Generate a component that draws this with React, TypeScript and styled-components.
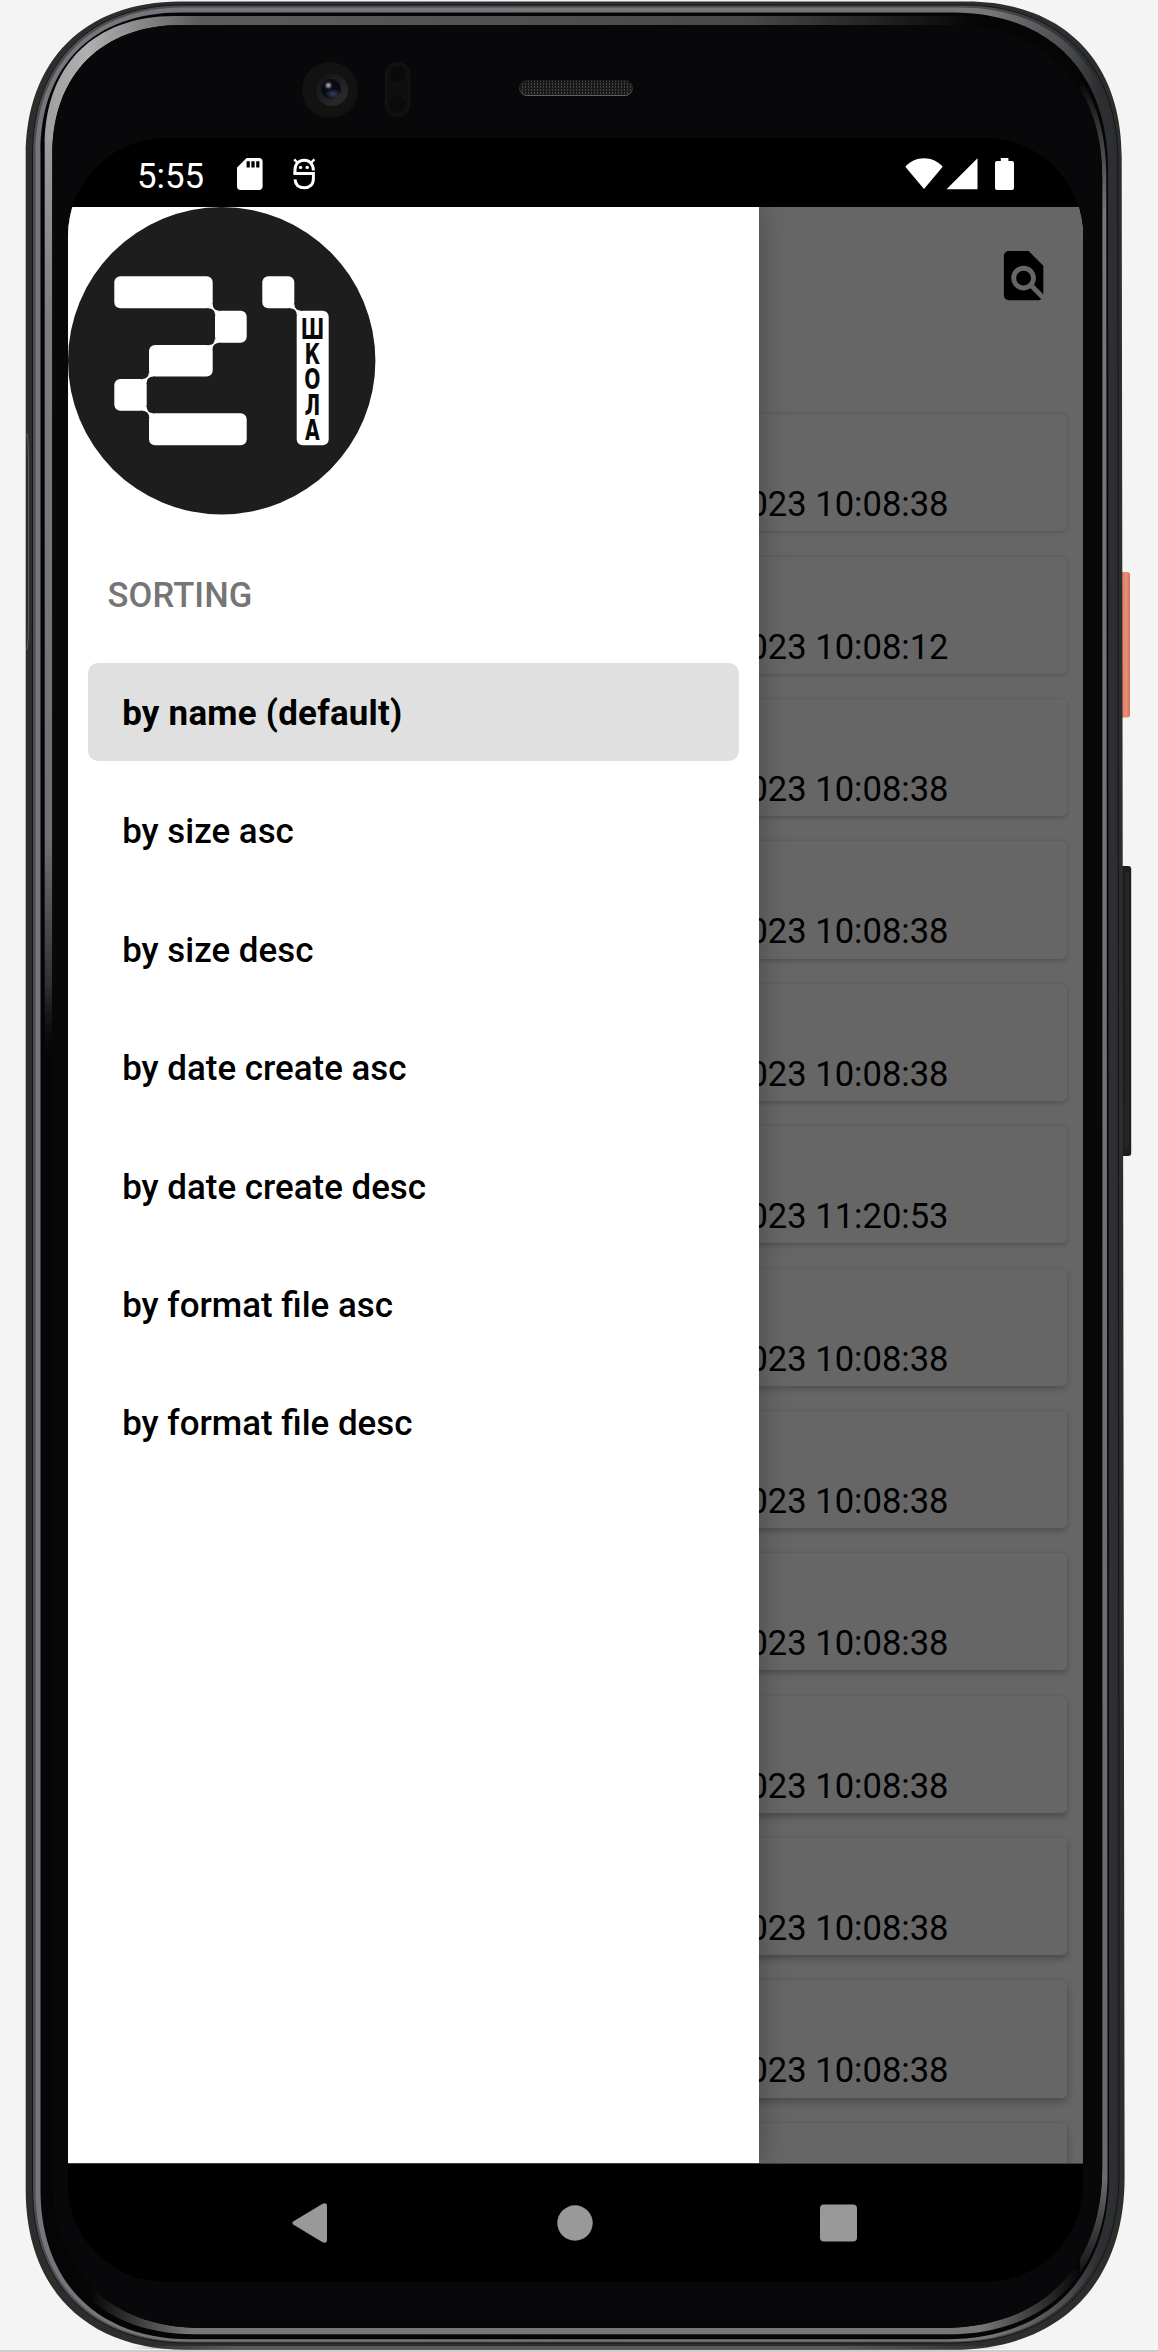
import React from "react";
import styled, { createGlobalStyle } from "styled-components";

const GlobalStyle = createGlobalStyle`
  *, *::before, *::after { box-sizing: border-box; }
  body { margin: 0; background: #f4f4f4; font-family: Roboto, "Noto Sans", sans-serif; }
`;

const Stage = styled.main`
  position: relative;
  width: 1158px;
  height: 2352px;
  overflow: hidden;
  background: #f4f4f4;
  border-bottom: 2px solid #cdcdcd;
`;

const FrameArt = styled.svg`
  position: absolute;
  inset: 0;
  display: block;
`;

const Device = styled.div`
  position: relative;
  display: flex;
  flex-direction: column;
  width: 1015px;
  margin-left: 68px;
`;

const Forehead = styled.div`
  display: flex;
  align-items: flex-start;
  height: 138px;
  padding: 62px 0 0 234px;
`;

const Camera = styled.svg`
  flex: none;
  width: 56px;
  height: 56px;
`;

const Sensor = styled.svg`
  flex: none;
  width: 25px;
  height: 55px;
  margin-left: 27px;
`;

const Speaker = styled.svg`
  flex: none;
  width: 114px;
  height: 16px;
  margin: 18px 0 0 109px;
`;

const Screen = styled.div`
  display: flex;
  flex-direction: column;
  height: 2144px;
  border-radius: 98px;
  overflow: hidden;
  background: #000;
`;

const StatusBar = styled.header`
  display: flex;
  align-items: flex-start;
  height: 69px;
  padding: 20px 69px 0 69px;
`;

const Clock = styled.span`
  width: 100px;
  margin-top: -2.5px;
  color: #fff;
  font-size: 34.8px;
  line-height: 40px;
`;

const StatusIcon = styled.svg<{ $w: number; $gap?: number }>`
  flex: none;
  width: ${(p) => p.$w}px;
  height: 32px;
  margin-left: ${(p) => p.$gap ?? 0}px;
  fill: #fff;
`;

const Spacer = styled.span`
  flex: 1;
`;

const Viewport = styled.div`
  position: relative;
  height: 1956px;
  overflow: hidden;
  background: #fff;
`;

const AppBar = styled.div`
  display: flex;
  justify-content: flex-end;
  height: 207.3px;
  padding: 39.4px 29.7px 0 0;
`;

const SearchIcon = styled.svg`
  width: 59.2px;
  height: 59.2px;
`;

const FileList = styled.ul`
  display: flex;
  flex-direction: column;
  gap: 25.2px;
  margin: 0;
  padding: 0 16px;
  list-style: none;
`;

const FileCard = styled.li<{ $depth: number }>`
  display: flex;
  flex: none;
  justify-content: flex-end;
  align-items: flex-end;
  height: 117.2px;
  padding: 0 118.5px 7.2px 0;
  border-radius: 5px;
  background: #fff;
  box-shadow: 0 ${(p) => 0.6 + p.$depth * 3}px ${(p) => 4 + p.$depth * 4}px
      rgba(0, 0, 0, ${(p) => 0.16 + p.$depth * 0.12}),
    0 0 2px rgba(0, 0, 0, 0.06);
`;

const FileDate = styled.span`
  color: #000;
  font-size: 34.55px;
  line-height: 40px;
  white-space: nowrap;
`;

const Scrim = styled.div`
  position: absolute;
  inset: 0;
  background: rgba(0, 0, 0, 0.6);
`;

const Drawer = styled.aside`
  position: absolute;
  inset: 0 auto 0 0;
  width: 690.8px;
  background: #fff;
  box-shadow: 0 0 28px rgba(0, 0, 0, 0.3);
`;

const Logo = styled.svg`
  display: block;
  width: 307.5px;
  height: 307.5px;
`;

const Lettering = styled.text`
  font-family: "DejaVu Sans", sans-serif;
  font-size: 28px;
  font-weight: 700;
  text-anchor: middle;
  fill: #0a0a0a;
`;

const SectionTitle = styled.h2`
  margin: 0;
  padding: 60px 0 0 39.6px;
  height: 138.4px;
  color: #757575;
  font-size: 34.55px;
  font-weight: 500;
  letter-spacing: 0.1px;
  line-height: 40px;
`;

const Menu = styled.nav`
  display: flex;
  flex-direction: column;
  gap: 19.75px;
  padding: 9.9px 19.8px;
`;

const MenuItem = styled.a<{ $active?: boolean }>`
  display: flex;
  align-items: center;
  height: 98.7px;
  padding: 2.4px 0 0 34.4px;
  border-radius: 10px;
  background: ${(p) => (p.$active ? "#e0e0e0" : "transparent")};
  color: #000;
  font-size: 34.9px;
  font-weight: ${(p) => (p.$active ? 700 : 500)};
  letter-spacing: ${(p) => (p.$active ? "0.24px" : "normal")};
`;

const NavBar = styled.footer`
  display: flex;
  align-items: center;
  height: 119px;
  padding-left: 224px;
  border-top: 1px solid #3c3e3e;
`;

const NavIcon = styled.svg<{ $w: number; $gap?: number }>`
  flex: none;
  width: ${(p) => p.$w}px;
  height: 40px;
  margin-left: ${(p) => p.$gap ?? 0}px;
  fill: #999;
`;

type Shell = {
  l: number;
  t: number;
  rt: number;
  rb: number;
  b: number;
  c: [number, number, number, number];
};

/* Closed outline with soft corners; c holds the corner reach, clockwise from top left. */
function outline({ l, t, rt, rb, b, c }: Shell): string {
  const q = 0.38;
  const [a, d, e, f] = c;
  return [
    `M${l} ${t + a}`,
    `C${l} ${t + a * q} ${l + a * q} ${t} ${l + a} ${t}`,
    `L${rt - d} ${t}`,
    `C${rt - d * q} ${t} ${rt} ${t + d * q} ${rt} ${t + d}`,
    `L${rb} ${b - e}`,
    `C${rb} ${b - e * q} ${rb - e * q} ${b} ${rb - e} ${b}`,
    `L${l + f} ${b}`,
    `C${l + f * q} ${b} ${l} ${b - f * q} ${l} ${b - f}Z`,
  ].join("");
}

const shell = outline({ l: 25.7, t: 1.5, rt: 1121.7, rb: 1124.6, b: 2349.8, c: [155, 155, 172, 160] });
const metal = outline({ l: 32.5, t: 5, rt: 1118, rb: 1119, b: 2343, c: [150, 156, 168, 155] });
const metalCore = outline({ l: 35.5, t: 7.5, rt: 1115, rb: 1116, b: 2341.5, c: [148, 156, 166, 153] });
const groove = outline({ l: 40.5, t: 12.5, rt: 1108, rb: 1109, b: 2339.3, c: [140, 156, 163, 150] });
const rim = outline({ l: 44.7, t: 16, rt: 1106.3, rb: 1107.6, b: 2334.3, c: [130, 158, 160, 150] });
const glass = outline({ l: 52.3, t: 25, rt: 1102.2, rb: 1102.2, b: 2328, c: [130, 152, 160, 150] });

function Frame() {
  return (
    <FrameArt width="1158" height="2352" viewBox="0 0 1158 2352">
      <defs>
        <linearGradient id="metal" gradientUnits="userSpaceOnUse" x1="30" y1="0" x2="1120" y2="0">
          <stop offset="0" stopColor="#4c4e52" />
          <stop offset="0.88" stopColor="#4a4a4d" />
          <stop offset="0.97" stopColor="#2b2d30" />
          <stop offset="1" stopColor="#2a2c2e" />
        </linearGradient>
        <linearGradient id="core" gradientUnits="userSpaceOnUse" x1="30" y1="0" x2="1120" y2="0">
          <stop offset="0" stopColor="#74767b" />
          <stop offset="0.88" stopColor="#77777b" />
          <stop offset="0.95" stopColor="#4c4d50" />
          <stop offset="0.98" stopColor="#2d2f32" />
          <stop offset="1" stopColor="#2d2f32" />
        </linearGradient>
        <linearGradient id="chin" gradientUnits="userSpaceOnUse" x1="130" y1="0" x2="1010" y2="0">
          <stop offset="0" stopColor="#5a5a5a" stopOpacity="0" />
          <stop offset="0.12" stopColor="#5a5a5a" />
          <stop offset="0.8" stopColor="#5a5a5a" />
          <stop offset="1" stopColor="#5a5a5a" stopOpacity="0" />
        </linearGradient>
        <linearGradient id="topRim" gradientUnits="userSpaceOnUse" x1="40" y1="0" x2="980" y2="0">
          <stop offset="0" stopColor="#9c9c9c" />
          <stop offset="0.05" stopColor="#b0b0b0" />
          <stop offset="0.17" stopColor="#5c5c5c" />
          <stop offset="0.75" stopColor="#484848" />
          <stop offset="1" stopColor="#484848" stopOpacity="0" />
        </linearGradient>
        <linearGradient id="leftRim" gradientUnits="userSpaceOnUse" x1="0" y1="140" x2="0" y2="1060">
          <stop offset="0" stopColor="#9c9c9c" />
          <stop offset="0.2" stopColor="#7c7c7c" />
          <stop offset="0.76" stopColor="#707070" />
          <stop offset="0.92" stopColor="#303030" />
          <stop offset="1" stopColor="#101010" stopOpacity="0" />
        </linearGradient>
        <linearGradient id="rightRim" gradientUnits="userSpaceOnUse" x1="0" y1="80" x2="0" y2="2290">
          <stop offset="0" stopColor="#777" stopOpacity="0" />
          <stop offset="0.02" stopColor="#777" stopOpacity="0.4" />
          <stop offset="0.06" stopColor="#777" />
          <stop offset="0.95" stopColor="#6a6a6a" />
          <stop offset="1" stopColor="#6a6a6a" stopOpacity="0" />
        </linearGradient>
        <linearGradient id="bottomRim" gradientUnits="userSpaceOnUse" x1="90" y1="0" x2="1080" y2="0">
          <stop offset="0" stopColor="#777" stopOpacity="0" />
          <stop offset="0.1" stopColor="#777" />
          <stop offset="0.9" stopColor="#777" />
          <stop offset="1" stopColor="#777" stopOpacity="0" />
        </linearGradient>
        <linearGradient id="coral" x1="0" x2="1" y1="0" y2="0">
          <stop offset="0" stopColor="#b8523f" />
          <stop offset="0.3" stopColor="#de7e69" />
          <stop offset="0.7" stopColor="#e58f7a" />
          <stop offset="1" stopColor="#d96f58" />
        </linearGradient>
        <clipPath id="ring">
          <path d={rim + glass} clipRule="evenodd" />
        </clipPath>
      </defs>
      <rect x="1118" y="572" width="12" height="145.5" rx="3" fill="url(#coral)" />
      <rect x="1118" y="866" width="13.2" height="290" rx="3" fill="#1d1d1d" />
      <path d="M1127 872v276" stroke="#252525" strokeWidth="4" />
      <path d={shell} fill="#2c2e2c" />
      <rect x="130" y="2346" width="880" height="3" fill="url(#chin)" />
      <path d="M26.8 433C28.6 440 28.6 446 28.6 460V620C28.6 636 28.6 642 26.8 650" fill="none" stroke="#56585a" strokeWidth="1.2" />
      <path d={metal} fill="url(#metal)" stroke="#151617" strokeWidth="1" />
      <path d={metalCore} fill="url(#core)" />
      <path d={groove} fill="#050506" />
      <g clipPath="url(#ring)">
        <rect x="40" y="140" width="20" height="920" fill="url(#leftRim)" />
        <rect x="40" y="10" width="940" height="130.5" fill="url(#topRim)" />
        <rect x="1080" y="80" width="30" height="2210" fill="url(#rightRim)" />
        <rect x="90" y="2270" width="990" height="70" fill="url(#bottomRim)" />
      </g>
      <path d={glass} fill="#08080a" />
    </FrameArt>
  );
}

function CameraArt() {
  return (
    <Camera viewBox="0 0 56 56">
      <defs>
        <linearGradient id="lensRing" x1="0" y1="0" x2="1" y2="1">
          <stop offset="0" stopColor="#121212" />
          <stop offset="1" stopColor="#2e2e2e" />
        </linearGradient>
        <radialGradient id="tint">
          <stop offset="0" stopColor="#34406a" />
          <stop offset="1" stopColor="#34406a" stopOpacity="0" />
        </radialGradient>
        <radialGradient id="glint">
          <stop offset="0" stopColor="#b4b4b8" />
          <stop offset="0.4" stopColor="#77777c" />
          <stop offset="1" stopColor="#3a3a40" stopOpacity="0" />
        </radialGradient>
      </defs>
      <circle cx="28" cy="28" r="28" fill="#111211" />
      <circle cx="30" cy="28" r="16" fill="url(#lensRing)" />
      <circle cx="29" cy="27" r="10" fill="#0b0a10" />
      <ellipse cx="31" cy="32" rx="8" ry="5.5" fill="url(#tint)" />
      <circle cx="26.4" cy="23.4" r="4.4" fill="url(#glint)" />
    </Camera>
  );
}

function SensorArt() {
  return (
    <Sensor viewBox="0 0 25 55">
      <rect x="0.5" y="0.5" width="24" height="54" rx="12" fill="#0f0f10" stroke="#161617" />
      <circle cx="12.5" cy="12.5" r="9" fill="#0a0a0b" stroke="#131314" />
      <circle cx="12.5" cy="42.5" r="9" fill="#0a0a0b" stroke="#131314" />
    </Sensor>
  );
}

function SpeakerArt() {
  return (
    <Speaker viewBox="0 0 114 16">
      <defs>
        <pattern id="mesh" width="3" height="3" patternUnits="userSpaceOnUse">
          <rect width="3" height="3" fill="#191919" />
          <rect width="1" height="2" fill="#444" />
        </pattern>
        <linearGradient id="lip" x1="0" y1="0" x2="0" y2="1">
          <stop offset="0.4" stopColor="#1c1c1c" />
          <stop offset="1" stopColor="#606060" />
        </linearGradient>
      </defs>
      <rect x="0.5" y="0.5" width="113" height="15" rx="7.5" fill="url(#mesh)" stroke="url(#lip)" />
    </Speaker>
  );
}

const blocks = [
  { x: 46.3, y: 69.3, w: 98.4, h: 32 },
  { x: 147, y: 103.7, w: 31.7, h: 32 },
  { x: 81, y: 138, w: 63.7, h: 31.4 },
  { x: 46.3, y: 172, w: 32.4, h: 31.7 },
  { x: 81, y: 206.3, w: 97.7, h: 32 },
  { x: 194.3, y: 69.3, w: 32, h: 32 },
  { x: 228.7, y: 103.7, w: 32, h: 134.6 },
];

/* Joints between blocks: centre point and direction of the diagonal. */
const joints = [
  { x: 145.8, y: 102.5, flip: 1 },
  { x: 145.8, y: 136.9, flip: -1 },
  { x: 79.8, y: 170.7, flip: -1 },
  { x: 79.8, y: 205, flip: 1 },
  { x: 227.5, y: 102.5, flip: 1 },
];

/* The lettering is squeezed sideways to fit the narrow column. */
const squeeze = 0.68;
const letterX = Array(5).fill((244.4 / squeeze).toFixed(1)).join(" ");

function LogoArt() {
  return (
    <Logo viewBox="0 0 307.5 307.5">
      <circle cx="153.7" cy="153.7" r="153.7" fill="#1d1d1d" />
      {blocks.map((b, i) => (
        <rect key={i} x={b.x} y={b.y} width={b.w} height={b.h} rx="6" fill="#fff" />
      ))}
      {joints.map((j, i) => (
        <path
          key={i}
          transform={`translate(${j.x} ${j.y}) scale(${j.flip} 1)`}
          d="M-1.1 -5.5Q-1.1 1.2 5.7 1.2L1.2 5.5Q1.2 -1.2 -5.8 -1.2Z"
          fill="#fff"
        />
      ))}
      <Lettering transform={`scale(${squeeze} 1)`} x={letterX} y="132 157.2 182.4 207.8 233.4">
        ШКОЛА
      </Lettering>
    </Logo>
  );
}

const times = [
  "10:08:38",
  "10:08:12",
  "10:08:38",
  "10:08:38",
  "10:08:38",
  "11:20:53",
  "10:08:38",
  "10:08:38",
  "10:08:38",
  "10:08:38",
  "10:08:38",
  "10:08:38",
];

const sortings = [
  "by name (default)",
  "by size asc",
  "by size desc",
  "by date create asc",
  "by date create desc",
  "by format file asc",
  "by format file desc",
];

export default function App() {
  return (
    <>
      <GlobalStyle />
      <Stage>
        <Frame />
        <Device>
          <Forehead>
            <CameraArt />
            <SensorArt />
            <SpeakerArt />
          </Forehead>
          <Screen>
            <StatusBar>
              <Clock>5:55</Clock>
              <StatusIcon viewBox="4 2 16 20" $w={25.6}>
                <path d="M18 2h-8L4.02 8 4 20c0 1.1.9 2 2 2h12c1.1 0 2-.9 2-2V4c0-1.1-.9-2-2-2zm-6 6h-2V4h2v4zm3 0h-2V4h2v4zm3 0h-2V4h2v4z" />
              </StatusIcon>
              <StatusIcon viewBox="0 0 23 32" $w={23} $gap={30}>
                <g fill="none" stroke="#fff" strokeWidth="3">
                  <path d="M2 16V11.5C2 6 6 2.2 11.2 2.2S20.4 6 20.4 12.6" />
                  <path d="M1.2 1.4L4.8 5M21.4 1.4L17.8 5" strokeWidth="2.4" />
                  <path d="M0.5 15.6H20.4V20.5C20.4 26.5 16.6 29.8 11.2 29.8C5.8 29.8 2.4 26.6 2 21.4" />
                </g>
                <circle cx="7.6" cy="9.4" r="1.7" />
                <circle cx="14.2" cy="9.4" r="1.7" />
              </StatusIcon>
              <Spacer />
              <StatusIcon viewBox="0 0 38 32" $w={38}>
                <path d="M19 31L0.3 8.8C5 3.2 11.5 0.2 19 0.2S33 3.2 37.7 8.8Z" />
              </StatusIcon>
              <StatusIcon viewBox="0 0 32 32" $w={32} $gap={2.5}>
                <path d="M0.5 31.3L31.5 0.3V31.3Z" />
              </StatusIcon>
              <StatusIcon viewBox="0 0 19 32" $w={19} $gap={17.5}>
                <path d="M5.8 0H13.4V3H17A2 2 0 0 1 19 5V30A2 2 0 0 1 17 32H2A2 2 0 0 1 0 30V5A2 2 0 0 1 2 3H5.8Z" />
              </StatusIcon>
            </StatusBar>
            <Viewport>
              <AppBar>
                <SearchIcon viewBox="0 0 24 24">
                  <path d="M20 19.59V8l-6-6H6c-1.1 0-1.99.9-1.99 2L4 20c0 1.1.89 2 1.99 2H18c.45 0 .85-.15 1.19-.4l-4.43-4.43c-.8.52-1.74.83-2.76.83-2.76 0-5-2.24-5-5s2.24-5 5-5 5 2.24 5 5c0 1.02-.31 1.96-.83 2.75L20 19.59zM9 13c0 1.66 1.34 3 3 3s3-1.34 3-3-1.34-3-3-3-3 1.34-3 3z" />
                </SearchIcon>
              </AppBar>
              <FileList>
                {times.map((time, i) => (
                  <FileCard key={i} $depth={i / 11}>
                    <FileDate>2023 {time}</FileDate>
                  </FileCard>
                ))}
                <FileCard $depth={1} />
              </FileList>
              <Scrim />
              <Drawer>
                <LogoArt />
                <SectionTitle>SORTING</SectionTitle>
                <Menu>
                  {sortings.map((label, i) => (
                    <MenuItem key={label} $active={i === 0}>
                      {label}
                    </MenuItem>
                  ))}
                </Menu>
              </Drawer>
            </Viewport>
            <NavBar>
              <NavIcon viewBox="0 0 35 40" $w={35}>
                <path d="M1.6 18.2L30.6 0.7Q35 -1 35 3.2V36.8Q35 41 30.6 39.3L1.6 21.8Q-0.8 20 1.6 18.2Z" />
              </NavIcon>
              <NavIcon viewBox="0 0 36 40" $w={36} $gap={230}>
                <circle cx="18" cy="20" r="17.7" />
              </NavIcon>
              <NavIcon viewBox="0 0 37 40" $w={37} $gap={227}>
                <rect y="1.5" width="37" height="37" rx="4" />
              </NavIcon>
            </NavBar>
          </Screen>
        </Device>
      </Stage>
    </>
  );
}
